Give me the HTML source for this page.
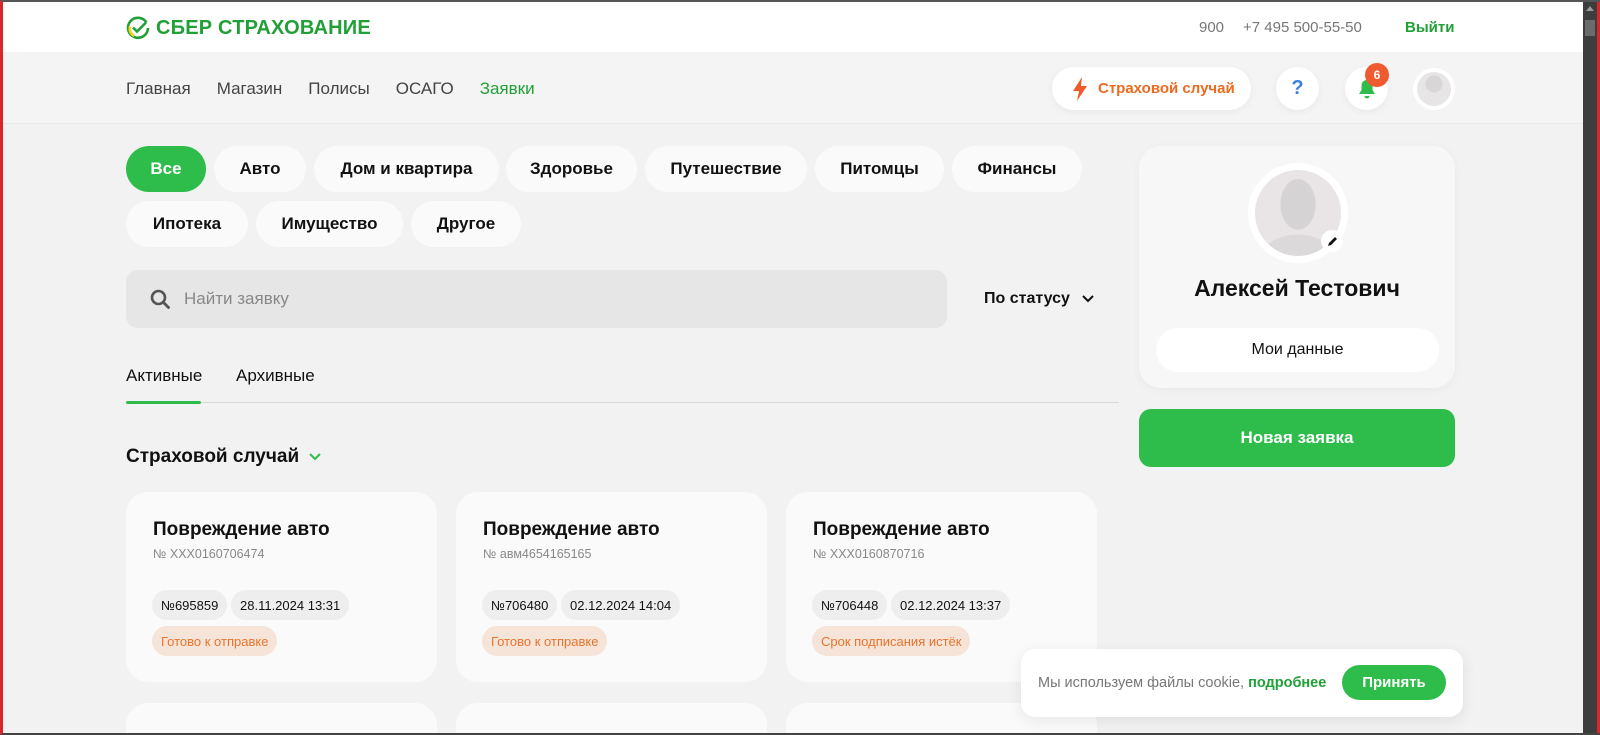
<!DOCTYPE html>
<html style="width:1600px;height:735px;overflow:hidden"><head><meta charset="utf-8"><style>
*{box-sizing:border-box;margin:0;padding:0}
body{width:1600px;height:735px;overflow:hidden;background:#f2f2f2;font-family:"Liberation Sans","DejaVu Sans",sans-serif;color:#111;position:relative}
.frame{position:absolute;inset:0;border-left:3px solid #d8262c;border-top:2px solid #555;border-bottom:2px solid #444;pointer-events:none;z-index:50}
.sb{position:absolute;right:0;top:0;width:17px;height:735px;background:#3d3d3d;border-right:3px solid #d8262c;z-index:40}
.sb .th{position:absolute;left:2px;top:20px;width:10px;height:16px;background:#6b6b6b}
.sb .ar{position:absolute;left:3px;top:6px;width:0;height:0;border:4px solid transparent;border-bottom:5px solid #999;border-top:0}
.top{position:absolute;left:0;top:0;width:1583px;height:52px;background:#fff}
.nav{position:absolute;left:0;top:52px;width:1583px;height:72px;background:#f4f4f4;border-bottom:1px solid #e8e8e8}
.abs{position:absolute}
.logo{left:126px;top:16px;font-weight:700;font-size:20px;color:#21a038;display:flex;align-items:center;gap:6px;letter-spacing:.2px}
.toplinks{top:19px;font-size:15px;color:#777}
.navlinks{left:126px;top:79px;font-size:17px;color:#444;display:flex;gap:26px}
.pill{background:#fff;border-radius:24px;box-shadow:0 2px 8px rgba(0,0,0,.05)}
.chip{position:absolute;height:46px;border-radius:23px;background:#fafafa;font-size:17px;font-weight:700;display:flex;align-items:center;justify-content:center;color:#111}
.card{position:absolute;background:#fafafa;border-radius:22px;width:311px}
.card h3{position:absolute;left:27px;top:27px;font-size:19px;font-weight:700}
.card .num{position:absolute;left:27px;top:55px;font-size:12.5px;color:#888}
.tag{position:absolute;height:30px;border-radius:15px;background:#eeeeee;font-size:13px;display:flex;align-items:center;padding:0 9px}
.st{background:#f6e4d8;color:#e8742c}
</style></head><body>
<div class="top"></div>
<div class="nav"></div>
<div class="abs logo"><svg width="24" height="24" viewBox="0 0 24 24"><path d="M20.5 6.5A10 10 0 1 0 22 12" fill="none" stroke="#21a038" stroke-width="2.6"/><path d="M4 10.5A8.5 8.5 0 0 0 8 20" fill="none" stroke="#f5d21b" stroke-width="2.6"/><path d="M7 11.5l4 4 9-9" fill="none" stroke="#21a038" stroke-width="2.6"/></svg>СБЕР СТРАХОВАНИЕ</div>
<div class="abs toplinks" style="left:1199px">900</div>
<div class="abs toplinks" style="left:1243px">+7 495 500-55-50</div>
<div class="abs toplinks" style="left:1405px;color:#21a038;font-weight:700">Выйти</div>
<div class="abs navlinks"><span>Главная</span><span>Магазин</span><span>Полисы</span><span>ОСАГО</span><span style="color:#21a038">Заявки</span></div>
<div class="abs pill" style="left:1052px;top:67px;width:199px;height:43px;display:flex;align-items:center;padding-left:20px;gap:10px;color:#ee6a1f;font-weight:700;font-size:15px"><svg width="16" height="24" viewBox="0 0 16 24"><path d="M10 0L1 14h6l-2 10 10-15H9z" fill="#ef5b2a"/></svg>Страховой случай</div>
<div class="abs pill" style="left:1276px;top:67px;width:43px;height:43px;border-radius:50%;display:flex;align-items:center;justify-content:center;color:#3d7fe0;font-weight:700;font-size:20px">?</div>
<div class="abs pill" style="left:1345px;top:67px;width:43px;height:43px;border-radius:50%;display:flex;align-items:center;justify-content:center"><svg width="18" height="20" viewBox="0 0 18 20"><path d="M9 1c-3.5 0-5.5 2.5-5.5 6v4L1 15h16l-2.5-4V7C14.5 3.5 12.5 1 9 1z M6.5 17a2.5 2.5 0 0 0 5 0z" fill="#2ebd4b"/></svg></div>
<div class="abs" style="left:1365px;top:63px;width:24px;height:24px;border-radius:50%;background:#f05a30;color:#fff;font-size:12px;font-weight:700;display:flex;align-items:center;justify-content:center">6</div>
<div class="abs" style="left:1413px;top:68px;width:42px;height:42px;border-radius:50%;background:#fff;padding:4px"><div style="width:34px;height:34px;border-radius:50%;background:radial-gradient(circle at 50% 35%,#d9d6d8 0 30%,#e8e5e7 31%)"></div></div>

<div class="chip" style="left:126px;top:146px;width:80px;background:#2ebd4b;color:#fff">Все</div>
<div class="chip" style="left:214px;top:146px;width:92px">Авто</div>
<div class="chip" style="left:314px;top:146px;width:185px">Дом и квартира</div>
<div class="chip" style="left:506px;top:146px;width:131px">Здоровье</div>
<div class="chip" style="left:645px;top:146px;width:162px">Путешествие</div>
<div class="chip" style="left:815px;top:146px;width:129px">Питомцы</div>
<div class="chip" style="left:952px;top:146px;width:130px">Финансы</div>
<div class="chip" style="left:126px;top:201px;width:122px">Ипотека</div>
<div class="chip" style="left:256px;top:201px;width:147px">Имущество</div>
<div class="chip" style="left:411px;top:201px;width:110px">Другое</div>

<div class="abs" style="left:126px;top:270px;width:821px;height:58px;border-radius:12px;background:#e6e6e6;display:flex;align-items:center;padding-left:24px;gap:14px;font-size:17px;color:#888"><svg width="20" height="20" viewBox="0 0 20 20"><circle cx="8.5" cy="8.5" r="6.5" fill="none" stroke="#555" stroke-width="2.6"/><path d="M13.5 13.5l5 5" stroke="#555" stroke-width="2.8" stroke-linecap="round"/></svg>Найти заявку</div>
<div class="abs" style="left:984px;top:290px;font-size:16px;font-weight:700;display:flex;align-items:center;gap:12px">По статусу <svg width="12" height="8" viewBox="0 0 12 8"><path d="M1 1l5 5 5-5" fill="none" stroke="#111" stroke-width="2"/></svg></div>

<div class="abs" style="left:126px;top:366px;font-size:17px">Активные</div>
<div class="abs" style="left:236px;top:366px;font-size:17px">Архивные</div>
<div class="abs" style="left:126px;top:402px;width:993px;height:1px;background:#d9d9d9"></div>
<div class="abs" style="left:126px;top:401px;width:75px;height:3px;background:#2ebd4b;border-radius:2px"></div>

<div class="abs" style="left:126px;top:446px;font-size:19px;font-weight:700;display:flex;align-items:center;gap:10px">Страховой случай <svg width="12" height="8" viewBox="0 0 12 8"><path d="M1 1l5 5 5-5" fill="none" stroke="#2ebd4b" stroke-width="2"/></svg></div>

<div class="card" style="left:126px;top:492px;height:190px"><h3>Повреждение авто</h3><div class="num">№ XXX0160706474</div><div class="tag" style="left:26px;top:98px">№695859</div><div class="tag" style="left:105px;top:98px">28.11.2024 13:31</div><div class="tag st" style="left:26px;top:134px">Готово к отправке</div></div>
<div class="card" style="left:456px;top:492px;height:190px"><h3>Повреждение авто</h3><div class="num">№ авм4654165165</div><div class="tag" style="left:26px;top:98px">№706480</div><div class="tag" style="left:105px;top:98px">02.12.2024 14:04</div><div class="tag st" style="left:26px;top:134px">Готово к отправке</div></div>
<div class="card" style="left:786px;top:492px;height:190px"><h3>Повреждение авто</h3><div class="num">№ XXX0160870716</div><div class="tag" style="left:26px;top:98px">№706448</div><div class="tag" style="left:105px;top:98px">02.12.2024 13:37</div><div class="tag st" style="left:26px;top:134px">Срок подписания истёк</div></div>
<div class="card" style="left:126px;top:703px;height:60px"></div>
<div class="card" style="left:456px;top:703px;height:60px"></div>
<div class="card" style="left:786px;top:703px;height:60px"></div>

<div class="abs" style="left:1139px;top:146px;width:316px;height:242px;border-radius:22px;background:#f7f7f7;box-shadow:0 2px 10px rgba(0,0,0,.04)">
 <div class="abs" style="left:109px;top:17px;width:100px;height:100px;border-radius:50%;background:#fff;padding:7px"><div style="width:86px;height:86px;border-radius:50%;background:radial-gradient(ellipse 18px 26px at 50% 40%,#d6d3d5 95%,transparent 100%),radial-gradient(ellipse 36px 22px at 50% 100%,#dcd9db 95%,transparent 100%),#e9e5e7"></div></div>
 <div class="abs" style="left:182px;top:84px;width:22px;height:22px;border-radius:50%;background:#fff;display:flex;align-items:center;justify-content:center"><svg width="11" height="11" viewBox="0 0 11 11"><path d="M1 10l1-3 6-6 2 2-6 6z" fill="#111"/></svg></div>
 <div class="abs" style="left:0;width:316px;top:129px;text-align:center;font-size:23px;font-weight:700">Алексей Тестович</div>
 <div class="abs" style="left:17px;top:182px;width:283px;height:44px;border-radius:22px;background:#fff;display:flex;align-items:center;justify-content:center;font-size:16px">Мои данные</div>
</div>
<div class="abs" style="left:1139px;top:409px;width:316px;height:58px;border-radius:12px;background:#2ebd4b;color:#fff;font-weight:700;font-size:17px;display:flex;align-items:center;justify-content:center">Новая заявка</div>

<div class="abs" style="left:1021px;top:649px;width:442px;height:68px;border-radius:14px;background:#fff;box-shadow:0 4px 16px rgba(0,0,0,.08);display:flex;align-items:center;padding-left:17px;font-size:14.5px;color:#777">Мы используем файлы cookie,&nbsp;<span style="color:#21a038;font-weight:700">подробнее</span>
 <div class="abs" style="left:321px;top:16px;width:104px;height:35px;border-radius:18px;background:#2ebd4b;color:#fff;font-weight:700;font-size:15px;display:flex;align-items:center;justify-content:center">Принять</div></div>

<div class="sb"><div class="ar"></div><div class="th"></div></div>
<div class="frame"></div>
</body></html>
